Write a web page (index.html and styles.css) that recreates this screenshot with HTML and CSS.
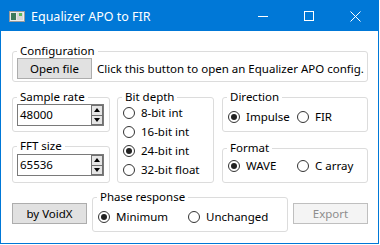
FILE: index.html
```html
<!DOCTYPE html>
<html lang="en">
<head>
    <meta charset="UTF-8">
    <title>Equalizer APO to FIR</title>
    <link rel="stylesheet" href="styles.css">
</head>
<body>

<div class="window">
    <!-- Title bar -->
    <div class="titlebar">
        <svg class="app-icon" width="16" height="11" viewBox="0 0 16 11">
            <rect x="0.5" y="0.5" width="15" height="10" fill="#ececec" stroke="#9a9a9a"/>
            <rect x="2" y="2" width="5" height="7" fill="#3d7a5c"/>
            <rect x="8" y="2" width="6" height="7" fill="#d8d8d8"/>
            <rect x="10" y="2" width="3" height="3" fill="#5cb85c"/>
        </svg>
        <span class="title">Equalizer APO to FIR</span>
        <div class="caption-buttons">
            <span class="caption-btn">
                <svg width="10" height="10" viewBox="0 0 10 10"><path d="M0 5.5h10" stroke="#fff"/></svg>
            </span>
            <span class="caption-btn">
                <svg width="10" height="10" viewBox="0 0 10 10"><rect x="0.5" y="0.5" width="9" height="9" fill="none" stroke="#fff"/></svg>
            </span>
            <span class="caption-btn">
                <svg width="11" height="11" viewBox="0 0 11 11"><path d="M0.5 0.5l10 10M10.5 0.5l-10 10" stroke="#fff"/></svg>
            </span>
        </div>
    </div>

    <div class="content">
        <!-- Config file -->
        <fieldset class="group config">
            <legend>Configuration</legend>
            <div class="config-row">
                <button class="btn">Open file</button>
                <span>Click this button to open an Equalizer APO config.</span>
            </div>
        </fieldset>

        <div class="options">
            <div class="col">
                <fieldset class="group sample">
                    <legend>Sample rate</legend>
                    <div class="spin">
                        <span class="spin-value">48000</span>
                        <span class="spin-btns">
                            <span class="spin-up"></span>
                            <span class="spin-down"></span>
                        </span>
                    </div>
                </fieldset>
                <fieldset class="group fft">
                    <legend>FFT size</legend>
                    <div class="spin">
                        <span class="spin-value">65536</span>
                        <span class="spin-btns">
                            <span class="spin-up"></span>
                            <span class="spin-down"></span>
                        </span>
                    </div>
                </fieldset>
            </div>

            <fieldset class="group bits">
                <legend>Bit depth</legend>
                <div class="radios stacked">
                    <label class="radio"><span class="dot"></span>8-bit int</label>
                    <label class="radio"><span class="dot"></span>16-bit int</label>
                    <label class="radio"><span class="dot checked"></span>24-bit int</label>
                    <label class="radio"><span class="dot"></span>32-bit float</label>
                </div>
            </fieldset>

            <div class="col right">
                <fieldset class="group direction">
                    <legend>Direction</legend>
                    <div class="radios inline">
                        <label class="radio"><span class="dot checked"></span>Impulse</label>
                        <label class="radio"><span class="dot"></span>FIR</label>
                    </div>
                </fieldset>
                <fieldset class="group format">
                    <legend>Format</legend>
                    <div class="radios inline">
                        <label class="radio"><span class="dot checked"></span>WAVE</label>
                        <label class="radio"><span class="dot"></span>C array</label>
                    </div>
                </fieldset>
            </div>
        </div>

        <div class="bottom">
            <button class="btn side-btn">by VoidX</button>
            <fieldset class="group phase">
                <legend>Phase response</legend>
                <div class="radios inline wide">
                    <label class="radio"><span class="dot checked"></span>Minimum</label>
                    <label class="radio"><span class="dot"></span>Unchanged</label>
                </div>
            </fieldset>
            <button class="btn side-btn" disabled>Export</button>
        </div>
    </div>
</div>

</body>
</html>
```

FILE: styles.css
```css
* {
    box-sizing: border-box;
}

body {
    margin: 0;
    background-color: #fff;
    font-family: "Noto Sans", "Liberation Sans", sans-serif;
    font-size: 11.5px;
    color: #000;
}

.window {
    width: 379px;
    height: 244px;
    border: 1px solid #0078d7;
    background-color: #fff;
}

/* Title bar */
.titlebar {
    height: 30px;
    background-color: #0078d7;
    color: #fff;
    display: flex;
    align-items: center;
    padding-left: 8px;
}

.app-icon {
    display: block;
    margin-right: 6px;
}

.title {
    font-size: 12.5px;
}

.caption-buttons {
    margin-left: auto;
    display: flex;
}

.caption-btn {
    width: 46px;
    height: 30px;
    display: flex;
    align-items: center;
    justify-content: center;
}

.caption-btn svg {
    display: block;
}

/* Content */
.content {
    padding: 13px 10px 0 11px;
}

.group {
    margin: 0;
    padding: 0 4px;
    border: 1px solid #dcdcdc;
    border-radius: 3px;
    min-width: 0;
}

.group legend {
    padding: 0 3px;
    line-height: 14px;
}

.btn {
    height: 21px;
    padding: 0;
    background-color: #e1e1e1;
    border: 1px solid #adadad;
    font-family: inherit;
    font-size: 11.5px;
    color: #000;
}

.btn:disabled {
    background-color: #f4f4f4;
    border-color: #bfbfbf;
    color: #8d8d8d;
}

.config {
    padding-bottom: 2px;
}

.config-row {
    display: flex;
    align-items: center;
    gap: 5px;
    white-space: nowrap;
}

.config-row .btn {
    width: 75px;
    flex-shrink: 0;
}

.options {
    display: grid;
    grid-template-columns: 98px 97px 147px;
    column-gap: 7px;
    margin-top: 8px;
}

.col {
    display: flex;
    flex-direction: column;
}

.col.right {
    padding-left: 1px;
}

/* Spin boxes */
.sample {
    padding-bottom: 5px;
}

.fft {
    margin-top: 7px;
    padding-top: 1px;
    padding-bottom: 6px;
}

.spin {
    width: 87px;
    height: 22px;
    border: 1px solid #7a7a7a;
    display: flex;
    align-items: stretch;
}

.spin-value {
    flex: 1;
    padding-left: 2px;
    line-height: 20px;
}

.spin-btns {
    width: 12px;
    display: flex;
    flex-direction: column;
}

.spin-up, .spin-down {
    flex: 1;
    background-color: #e5e5e5;
    border: 1px solid #707070;
    display: flex;
    align-items: center;
    justify-content: center;
}

.spin-down {
    border-top: none;
}

.spin-up::after, .spin-down::after {
    content: "";
    border-left: 3px solid transparent;
    border-right: 3px solid transparent;
}

.spin-up::after {
    border-bottom: 4px solid #000;
}

.spin-down::after {
    border-top: 4px solid #000;
}

/* Radio buttons */
.radios {
    margin-left: 1px;
}

.radios.stacked {
    margin-top: -1px;
}

.radios.inline {
    display: grid;
    grid-template-columns: 69px auto;
}

.radios.inline.wide {
    grid-template-columns: 90px auto;
}

.radio {
    display: flex;
    align-items: center;
    height: 19px;
    white-space: nowrap;
}

.dot {
    width: 12px;
    height: 12px;
    border: 1px solid #333;
    border-radius: 50%;
    background-color: #fff;
    margin-right: 6px;
    display: flex;
    align-items: center;
    justify-content: center;
    flex-shrink: 0;
}

.dot.checked::after {
    content: "";
    width: 6px;
    height: 6px;
    border-radius: 50%;
    background-color: #212121;
}

.direction {
    padding-top: 3px;
    padding-bottom: 5px;
}

.format {
    margin-top: 9px;
    padding-top: 1px;
    padding-bottom: 7px;
}

/* Bottom row */
.bottom {
    display: flex;
    justify-content: space-between;
    align-items: flex-start;
    width: 356px;
    margin-top: 7px;
}

.side-btn {
    width: 75px;
    margin-top: 13px;
}

.phase {
    width: 196px;
    padding-top: 3px;
    padding-bottom: 5px;
}
```
